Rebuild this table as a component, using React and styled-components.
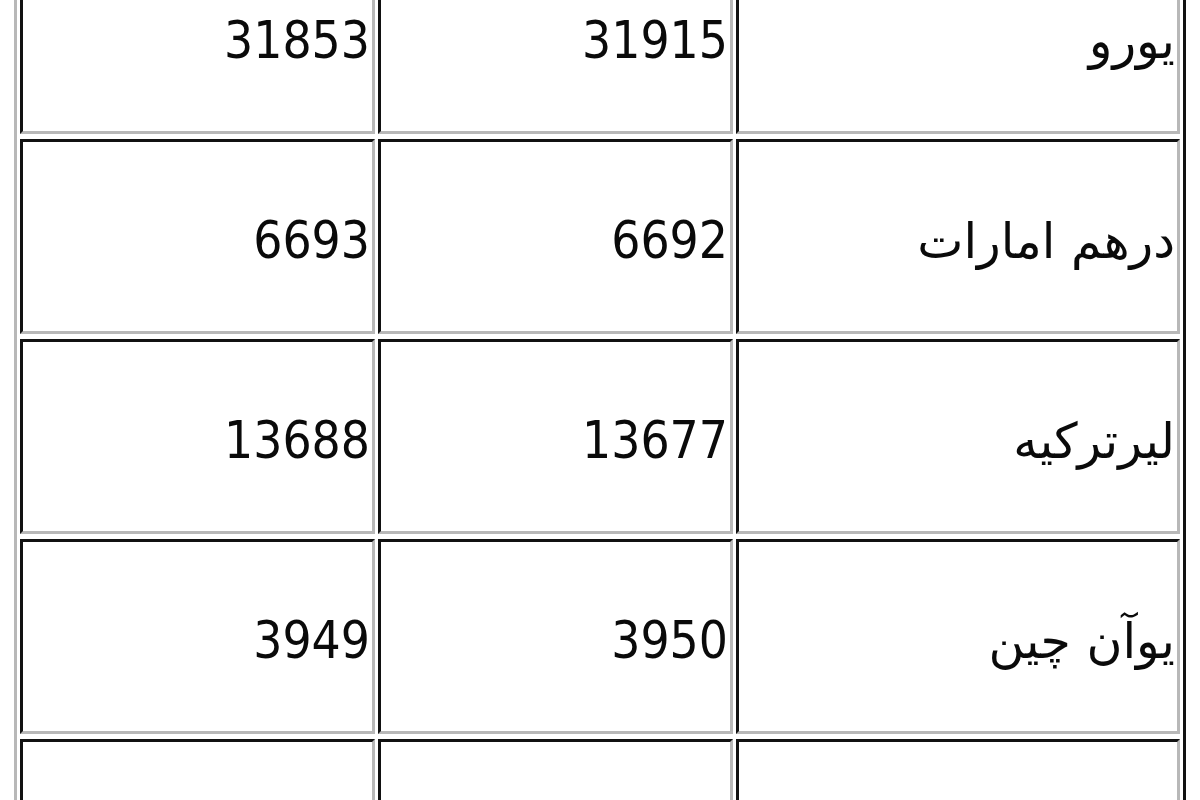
import React from "react";
import styled, { createGlobalStyle } from "styled-components";

const GlobalStyle = createGlobalStyle`
    html, body {
        margin: 0;
        padding: 0;
        background: #ffffff;
        overflow: hidden;
    }
`;

const Page = styled.div`
    padding-left: 14px;
    height: 800px;
    overflow: hidden;
`;

const RatesTable = styled.table`
    margin-top: -69px;
    width: 1172px;
    table-layout: fixed;
    border-collapse: separate;
    border-spacing: 3px 5px;
    border-style: solid;
    border-width: 3px;
    border-color: #b8b8b8 #111111 #111111 #b8b8b8;
    color: #0a0a0a;
`;

const Col = styled.col`
    width: ${(p) => (p.$wide ? "444px" : "355px")};
`;

const Cell = styled.td`
    box-sizing: border-box;
    height: 195px;
    padding: 8px 2px 0 0;
    text-align: right;
    vertical-align: middle;
    border-style: solid;
    border-width: 3px;
    border-color: #111111 #b8b8b8 #b8b8b8 #111111;
    white-space: nowrap;
    overflow: hidden;
    font-family: "DejaVu Sans Condensed", "DejaVu Sans", sans-serif;
    font-size: 51px;
`;

const NameCell = styled(Cell)`
    padding-top: 10px;
    font-family: "DejaVu Sans", sans-serif;
    font-size: 49px;
`;

const rows = [
    { name: "یورو", buy: "31915", sell: "31853" },
    { name: "درهم امارات", buy: "6692", sell: "6693" },
    { name: "لیرترکیه", buy: "13677", sell: "13688" },
    { name: "یوآن چین", buy: "3950", sell: "3949" },
    { name: "", buy: "", sell: "" },
];

const App = () => {
    return (
        <>
            <GlobalStyle />
            <Page>
                <RatesTable>
                    <colgroup>
                        <Col />
                        <Col />
                        <Col $wide />
                    </colgroup>
                    <tbody>
                        {rows.map((row, i) => (
                            <tr key={i}>
                                <Cell>{row.sell || "\u00a0"}</Cell>
                                <Cell>{row.buy || "\u00a0"}</Cell>
                                <NameCell dir="rtl">{row.name || "\u00a0"}</NameCell>
                            </tr>
                        ))}
                    </tbody>
                </RatesTable>
            </Page>
        </>
    );
};

export default App;
